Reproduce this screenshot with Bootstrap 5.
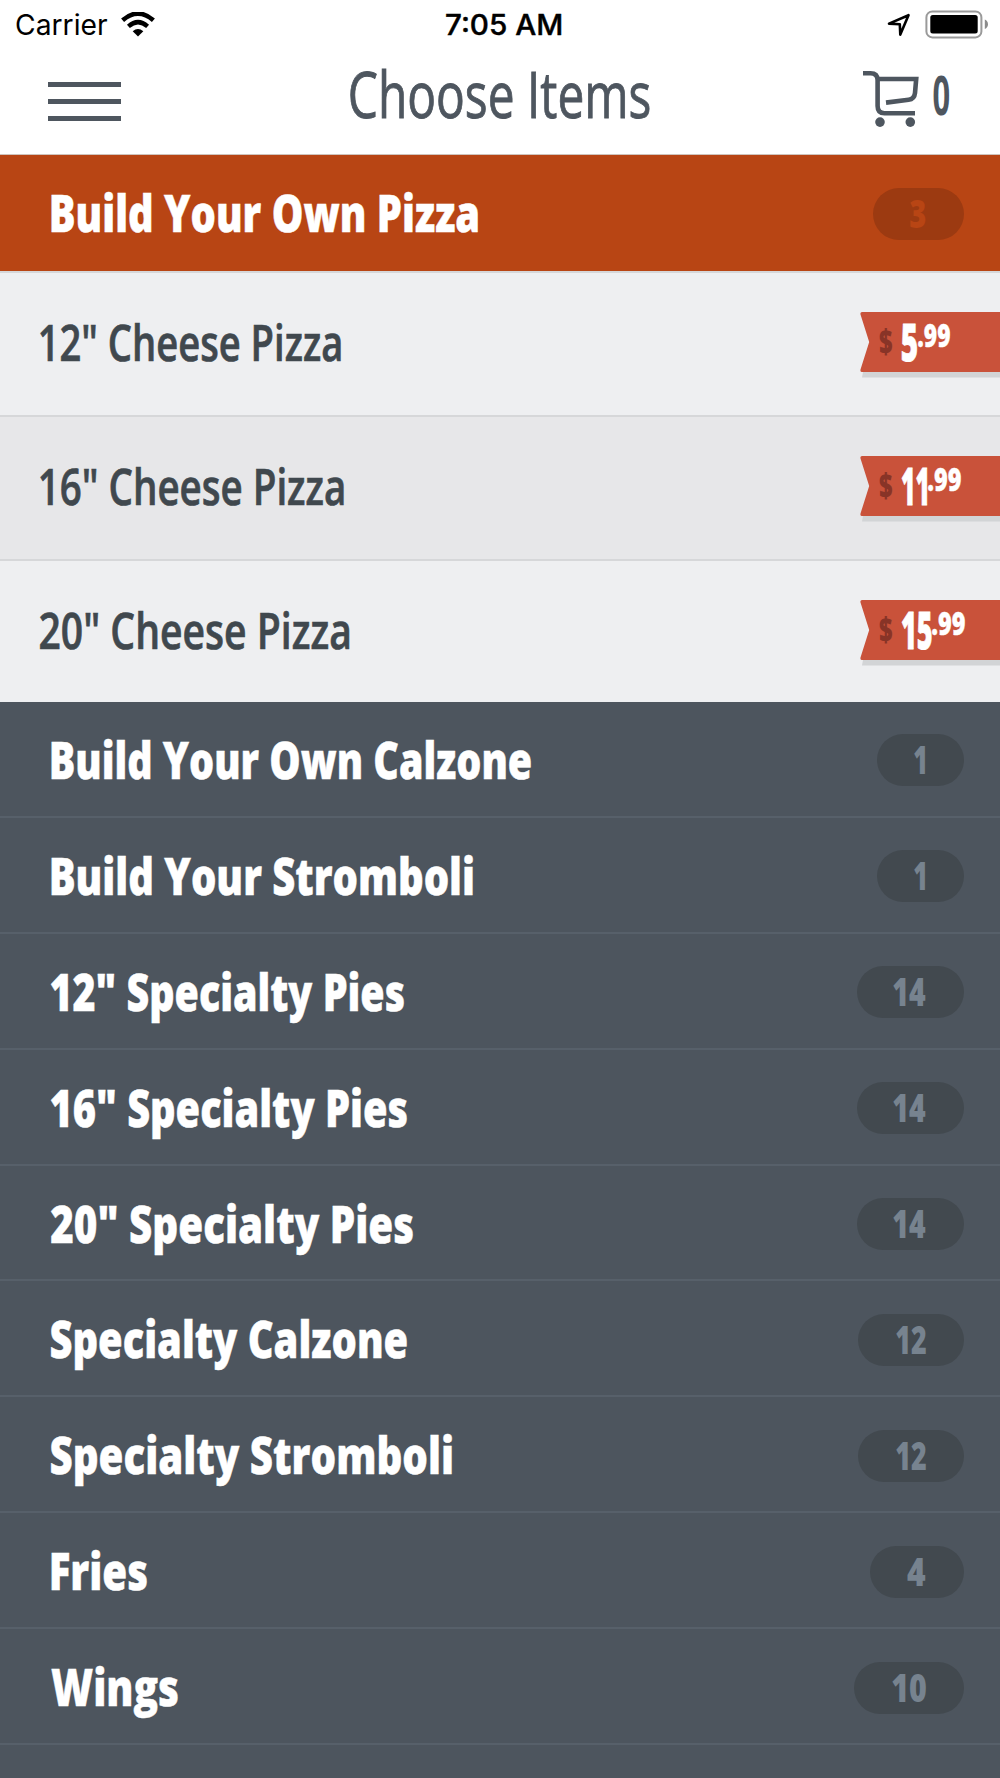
<!DOCTYPE html>
<html lang="en">
<head>
<meta charset="utf-8">
<meta name="viewport" content="width=device-width, initial-scale=1">
<title>Choose Items</title>
<link rel="stylesheet" href="https://cdn.jsdelivr.net/npm/bootstrap@5.3.0/dist/css/bootstrap.min.css">
<style>
  body { background: #4d555e; font-family: "Open Sans", "Noto Sans", sans-serif; overflow: hidden; height: 1778px; }
  svg { display: block; flex: none; }
  [data-ink] { display: inline-block; white-space: nowrap; flex: none; }
  [data-ink] > span { display: inline-block; transform-origin: 0 50%; }

  .statusbar { height: 46px; padding: 0 12px 0 16px; font-family: Inter, sans-serif; font-size: 28.2px; line-height: 51px; color: #000; }
  .status-time { font-weight: 500; margin-left: 3px; -webkit-text-stroke: .4px #000; }
  .wifi { margin: 12px 0 0 14px; }
  .location { margin: 13px 14px 0 0; }
  .battery { margin-top: 10px; }
  .topbar { height: 108px; padding: 0 51px 0 48px; color: #4e565f; }
  .menu-btn { width: 73px; height: 39px; margin-top: 2px; }
  .menu-btn i { display: block; height: 5px; background: #4e565f; }
  .screen-title { font-size: 64px; line-height: 80px; font-weight: 400; margin: -13px 0 0 16px; -webkit-text-stroke: .9px #4e565f; }
  .cart-icon { margin-top: -4px; }
  .cart-count { font-size: 53px; line-height: 60px; font-weight: 700; margin: -10px 0 0 13px; }
  .header-edge { height: 1px; background: #cfc4bd; }

  .cat { height: 115.9px; padding: 0 36.500px 0 50.500px; background: #4d555e; border-bottom: 2px solid #57606a; color: #fff; font-size: 51px; line-height: 60px; font-weight: 800; -webkit-text-stroke: .5px #fff; }
  .cat.open { height: 116px; background: #b84514; border-bottom-width: 0; padding-bottom: 2px; }
  .count { height: 52px; margin-top: 3px; border-radius: 26px; padding-right: 38px; background: #42494f; color: #77838f; font-size: 39.5px; line-height: 51px; font-weight: 800; -webkit-text-stroke: 0; }
  .open .count { background: #9c3a11; color: #b84514; }
  .n1 { width: 87px } .n3 { width: 91px } .n4 { width: 94px } .n12 { width: 106px } .n14 { width: 107px } .n10 { width: 110px }

  .pie { height: 144px; border-top: 2px solid #d6d7d9; padding: 0 0 4px 40px; background: #eeeff1; color: #40484e; font-size: 50px; line-height: 60px; font-weight: 600; -webkit-text-stroke: .7px #40484e; }
  .pie:nth-child(2) { background: #e7e7e9; }
  .pie:last-child { height: 143px; padding-bottom: 3px; }
  .ribbon { width: 140.500px; height: 60px; padding-left: 19px; color: #fff; font-weight: 800; position: relative; -webkit-text-stroke: 0; }
  .ribbon svg { position: absolute; left: 0; top: 0; z-index: 0; }
  .ribbon div { position: relative; }
  .dollar { font-size: 33px; line-height: 60px; color: #883427; width: 23px; }
  .whole { font-size: 51.5px; line-height: 58px; -webkit-text-stroke: .8px #fff; }
  .cents { font-size: 32px; line-height: 40px; margin-left: 1px; margin-top: 3px; -webkit-text-stroke: .4px #fff; }
</style>
</head>
<body>
<header class="bg-white">
  <div class="statusbar row g-0">
    <div class="col-4 d-flex">
      <span data-ink="91">Carrier</span>
      <svg class="wifi" width="34" height="25" viewBox="0 0 34 25">
        <path d="M1.6 8.2Q17-5 32.4 8.2" fill="none" stroke="#000" stroke-width="4.6"/>
        <path d="M7.4 14.3Q17 6 26.6 14.3" fill="none" stroke="#000" stroke-width="4.4"/>
        <path d="M11.7 19.3Q17 14.5 22.3 19.3L17 24.6Z"/>
      </svg>
    </div>
    <div class="col-4 text-center"><span class="status-time" data-ink="115.5">7:05 AM</span></div>
    <div class="col-4 d-flex justify-content-end">
      <svg class="location" width="24" height="24" viewBox="0 0 24 24"><path d="M2 10.6L21.5 2.2L13.3 21.6L12.8 11.3Z" fill="none" stroke="#000" stroke-width="2.6" stroke-linejoin="round"/></svg>
      <svg class="battery" width="63" height="29" viewBox="0 0 63 29">
        <rect x="1.4" y="1.4" width="55" height="26" rx="6" fill="none" stroke="#9a9a9a" stroke-width="2"/>
        <rect x="5.3" y="5" width="47.4" height="18.4" rx="2.5"/>
        <path d="M59.8 9.5Q63 11 63 14.2T59.8 19Z" fill="#8b8b8b"/>
      </svg>
    </div>
  </div>
  <nav class="topbar d-flex align-items-center justify-content-between">
    <div class="menu-btn d-flex flex-column justify-content-between" role="button" aria-label="Menu"><i></i><i></i><i></i></div>
    <div class="screen-title" data-ink="299.5">Choose Items</div>
    <div class="d-flex align-items-center">
      <svg class="cart-icon" width="57" height="57" viewBox="0 0 57 57" fill="none" stroke="#4e565f" stroke-width="4.6">
        <path d="M0 3.2H7.5C12 3.2 14.6 5.5 14.6 10V36C14.6 41 17 43.2 21.5 43.2H52"/>
        <path d="M15 9H53.2L52 23C51.6 27 49.6 29.2 45.6 29.7L23 32.6"/>
        <g fill="#4e565f" stroke="none"><circle cx="17" cy="52.1" r="4.8"/><circle cx="47.3" cy="52.1" r="4.8"/></g>
      </svg>
      <span class="cart-count" data-ink="16.3">0</span>
    </div>
  </nav>
  <div class="header-edge"></div>
</header>
<main>
  <div class="cat open d-flex align-items-center justify-content-between"><span data-ink="427">Build Your Own Pizza</span><div class="count n3 d-flex justify-content-end"><span data-ink="15.5">3</span></div></div>
  <section>
    <div class="pie d-flex align-items-center justify-content-between"><span data-ink="301">12" Cheese Pizza</span>
      <div class="ribbon d-flex"><svg width="141" height="68" viewBox="0 0 141 68"><path d="M3 60H141V65.5H2Z" fill="#d2d4d6"/><path d="M2 0H141V60H2Q0 60 .5 57.500L9.200 30L.5 2.500Q0 0 2 0Z" fill="#c9523a"/></svg><div class="dollar"><span data-ink="13.5">$</span></div><div class="whole"><span data-ink="15">5</span></div><div class="cents"><span data-ink="32">.99</span></div></div></div>
    <div class="pie d-flex align-items-center justify-content-between"><span data-ink="304">16" Cheese Pizza</span>
      <div class="ribbon d-flex"><svg width="141" height="68" viewBox="0 0 141 68"><path d="M3 60H141V65.5H2Z" fill="#d2d4d6"/><path d="M2 0H141V60H2Q0 60 .5 57.500L9.200 30L.5 2.500Q0 0 2 0Z" fill="#c9523a"/></svg><div class="dollar"><span data-ink="13.5">$</span></div><div class="whole"><span data-ink="25">11</span></div><div class="cents"><span data-ink="33">.99</span></div></div></div>
    <div class="pie d-flex align-items-center justify-content-between"><span data-ink="309.5">20" Cheese Pizza</span>
      <div class="ribbon d-flex"><svg width="141" height="68" viewBox="0 0 141 68"><path d="M3 60H141V65.5H2Z" fill="#d2d4d6"/><path d="M2 0H141V60H2Q0 60 .5 57.500L9.200 30L.5 2.500Q0 0 2 0Z" fill="#c9523a"/></svg><div class="dollar"><span data-ink="13.5">$</span></div><div class="whole"><span data-ink="29.5">15</span></div><div class="cents"><span data-ink="33">.99</span></div></div></div>
  </section>
  <div class="cat d-flex align-items-center justify-content-between"><span data-ink="480">Build Your Own Calzone</span><div class="count n1 d-flex justify-content-end"><span data-ink="11.5">1</span></div></div>
  <div class="cat d-flex align-items-center justify-content-between"><span data-ink="422">Build Your Stromboli</span><div class="count n1 d-flex justify-content-end"><span data-ink="11.5">1</span></div></div>
  <div class="cat d-flex align-items-center justify-content-between"><span data-ink="353">12" Specialty Pies</span><div class="count n14 d-flex justify-content-end"><span data-ink="32.5">14</span></div></div>
  <div class="cat d-flex align-items-center justify-content-between"><span data-ink="356">16" Specialty Pies</span><div class="count n14 d-flex justify-content-end"><span data-ink="32.5">14</span></div></div>
  <div class="cat d-flex align-items-center justify-content-between"><span data-ink="362">20" Specialty Pies</span><div class="count n14 d-flex justify-content-end"><span data-ink="32.5">14</span></div></div>
  <div class="cat d-flex align-items-center justify-content-between"><span data-ink="356">Specialty Calzone</span><div class="count n12 d-flex justify-content-end"><span data-ink="30">12</span></div></div>
  <div class="cat d-flex align-items-center justify-content-between"><span data-ink="401">Specialty Stromboli</span><div class="count n12 d-flex justify-content-end"><span data-ink="30">12</span></div></div>
  <div class="cat d-flex align-items-center justify-content-between"><span data-ink="96">Fries</span><div class="count n4 d-flex justify-content-end"><span data-ink="18.5">4</span></div></div>
  <div class="cat d-flex align-items-center justify-content-between"><span data-ink="127">Wings</span><div class="count n10 d-flex justify-content-end"><span data-ink="34">10</span></div></div>
</main>
<script src="https://cdn.jsdelivr.net/npm/bootstrap@5.3.0/dist/js/bootstrap.bundle.min.js"></script>
<script>
  // Condense each label so that its visible width equals data-ink.
  const ctx = document.createElement('canvas').getContext('2d');
  document.querySelectorAll('[data-ink]').forEach(el => {
    const cs = getComputedStyle(el), w = parseFloat(el.dataset.ink);
    ctx.font = `${cs.fontWeight} ${cs.fontSize} ${cs.fontFamily}`;
    const m = ctx.measureText(el.textContent);
    const k = w / (m.actualBoundingBoxLeft + m.actualBoundingBoxRight);
    const inner = document.createElement('span');
    inner.textContent = el.textContent;
    inner.style.transform = `translateX(${m.actualBoundingBoxLeft * k}px) scaleX(${k})`;
    el.replaceChildren(inner);
    el.style.width = w + 'px';
    el.style.textAlign = 'left';
  });
</script>
</body>
</html>
